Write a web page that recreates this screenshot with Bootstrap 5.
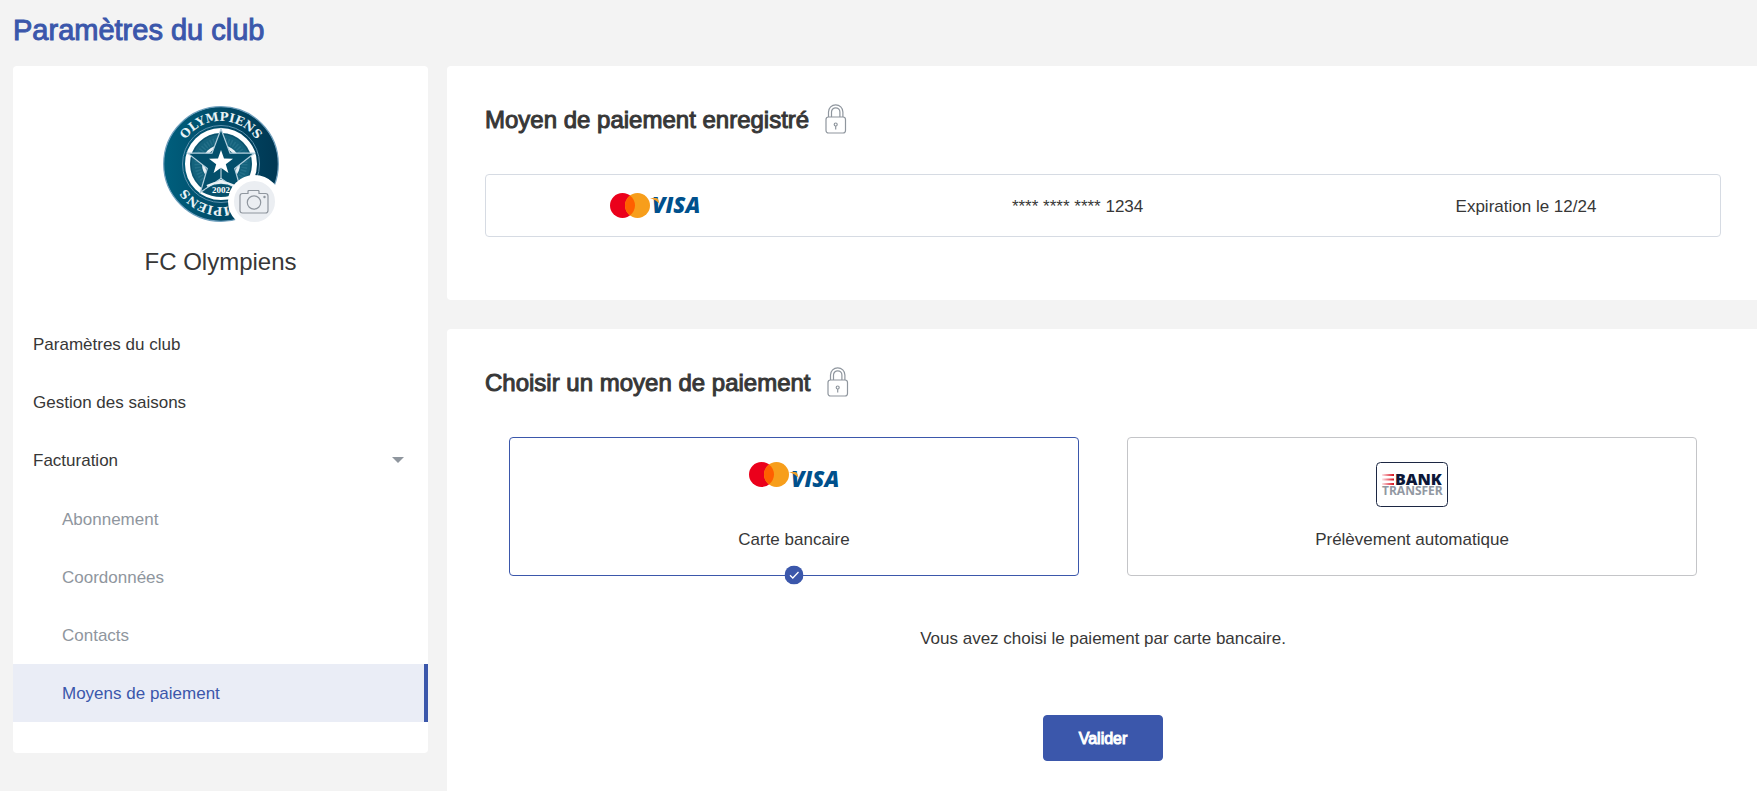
<!DOCTYPE html>
<html lang="fr">
<head>
<meta charset="utf-8">
<meta name="viewport" content="width=device-width, initial-scale=1">
<title>Paramètres du club</title>
<link href="https://cdn.jsdelivr.net/npm/bootstrap@5.3.0/dist/css/bootstrap.min.css" rel="stylesheet">
<style>
  :root { --brand: #3b57ab; --ink: #373737; --muted: #8f969e; }
  body { background: #f3f3f3; color: var(--ink); font-family: "Liberation Sans", Arial, sans-serif; font-size: 17px; line-height: 24px; }
  .page-title { color: var(--brand); font-size: 29px; line-height: 36px; font-weight: 400; -webkit-text-stroke: 1px; padding: 12px 13px 18px; }
  .layout { display: grid; grid-template-columns: minmax(0, 415fr) minmax(0, 1310fr); gap: 19px; padding-left: 13px; }
  .panel { background: #fff; border-radius: 4px; }
  .side { padding: 40px 0 31px; }
  .crest { width: 116px; height: 116px; }
  .photo-btn { right: -2px; bottom: -6px; width: 53px; height: 53px; border: 6px solid #fff; background: #ebeef2; color: var(--muted); }
  .club-name { font-size: 24px; line-height: 32px; margin: 24px 0 38px; }
  .side-link { height: 58px; padding: 0 20px; color: var(--ink); background: none; }
  .side-sub { padding: 2px 0 0 49px; color: var(--muted); }
  .side-sub.active { color: var(--brand); background: #eaedf6; border-right: 4px solid var(--brand); }
  .stack { display: flex; flex-direction: column; gap: 29px; }
  .stack .panel { border-top-right-radius: 0; border-bottom-right-radius: 0; padding: 38px 36px 63px 38px; }
  .panel-title { font-size: 24px; line-height: 32px; font-weight: 400; -webkit-text-stroke: 1px; }
  .panel-title svg { margin-bottom: 2px; }
  .saved { margin-top: 38px; height: 63px; padding: 0 10%; border: 1px solid #d6dbe3; border-radius: 4px; }
  .saved span { padding-top: 2px; }
  .choices { display: grid; grid-template-columns: 1fr 1fr; gap: 48px; margin-top: 38px; padding: 0 24px; }
  .choice { height: 139px; padding-top: 24px; border: 1px solid #c4c5c8; border-radius: 4px; cursor: pointer; }
  .choice-logo { height: 58px; }
  .tick { display: none; width: 19px; height: 19px; }
  .btn-check:checked + .choice { border-color: var(--brand); }
  .btn-check:checked + .choice .tick { display: block; }
  .notice { margin: 51px 0 64px; }
  .submit-btn { --bs-btn-bg: #3b57ab; --bs-btn-color: #fff; --bs-btn-border-color: #3b57ab; --bs-btn-hover-bg: #30488f; --bs-btn-hover-color: #fff; width: 120px; height: 46px; padding: 8px 0 6px; border-radius: 4px; font-size: 16px; -webkit-text-stroke: 1px; }
  @media (max-width: 991px) {
    .layout { grid-template-columns: minmax(0, 1fr); padding-right: 13px; }
    .choices { grid-template-columns: 1fr; padding: 0; }
  }
</style>
</head>
<body>
<svg class="d-none" aria-hidden="true">
  <symbol id="cards" viewBox="0 0 90 26">
    <circle cx="12.5" cy="12.5" r="12.5" fill="#eb001b"/>
    <circle cx="27.5" cy="12.5" r="12.5" fill="#f79e1b"/>
    <path d="M20 2.5a12.5 12.5 0 0 1 0 20a12.500 12.500 0 0 1 0-20z" fill="#ff5f00"/>
  </symbol>
  <symbol id="lock" viewBox="0 0 22 30">
    <g fill="none" stroke="#8f969e" stroke-width="1.200">
      <rect x="1" y="13" width="19.500" height="16" rx="2.500"/>
      <path d="M3.500 13V8a7.200 7.200 0 0 1 14.400 0v5M6.500 13V8a4.200 4.200 0 0 1 8.400 0v5"/>
      <circle cx="10.700" cy="20.500" r="1.500"/><path d="M10.700 22v3.500"/>
    </g>
  </symbol>
</svg>

<h1 class="page-title mb-0">Paramètres du club</h1>

<div class="layout">
  <aside>
    <div class="panel side">
      <div class="d-flex justify-content-center">
        <div class="position-relative">
          <svg class="crest d-block" viewBox="0 0 116 116" role="img" aria-label="Blason Olympiens">
            <defs>
              <linearGradient id="navy" x1="0" x2="1"><stop offset="0" stop-color="#005f7d"/><stop offset="1" stop-color="#003753"/></linearGradient>
              <path id="ringPath" d="M58 101a43 43 0 0 1 0-86a43 43 0 0 1 0 86"/>
            </defs>
            <circle cx="58" cy="58" r="57.300" fill="url(#navy)" stroke="#6f9fbd" stroke-width="1.200"/>
            <circle cx="58" cy="58" r="38.500" fill="none" stroke="#5d91ad" stroke-width="1"/>
            <circle cx="58" cy="58" r="33.500" fill="#14627c" stroke="#fff" stroke-width="5"/>
            <circle cx="58" cy="58" r="30" fill="none" stroke="#0a4e69" stroke-width="1"/>
            <circle cx="58" cy="58" r="23.500" fill="none" stroke="#236f88" stroke-width="6" stroke-dasharray="1.500 1.500"/>
            <circle cx="58" cy="58" r="17.500" fill="#0a5470" stroke="#e9f1f5" stroke-width="3"/>
            <path d="M58 23L67 47.200H91.300L71.700 62.500L78.600 86.300L58 72.500L37.400 86.300L44.300 62.500L24.700 47.200H49Z" fill="#034f6b" stroke="#b3cfdd" stroke-width="1.200"/>
            <path d="M58 62V73" stroke="#d9e7ee"/>
            <path d="M58 44L61 52.600L70 52.800L62.800 58.300L65.400 67L58 61.800L50.600 67L53.200 58.300L46 52.800L55 52.600Z" fill="#fff"/>
            <path d="M42 84Q58 73 74 84L77 86Q58 96 39 86Z" fill="#07506b"/>
            <path d="M44 80Q58 73 72 80" fill="none" stroke="#e9f1f5" stroke-width="2.500"/>
            <text x="58" y="87" text-anchor="middle" font-family="Liberation Serif, serif" font-weight="700" font-size="9" fill="#fff">2002</text>
            <g font-family="DejaVu Serif, serif" font-weight="700" font-size="12" fill="#e9f3f6" text-anchor="middle">
              <text><textPath href="#ringPath" startOffset="50%">OLYMPIENS</textPath></text>
              <text transform="rotate(180 58 58)"><textPath href="#ringPath" startOffset="50%">OLYMPIENS</textPath></text>
            </g>
          </svg>
          <button type="button" class="photo-btn position-absolute rounded-circle p-0 d-flex align-items-center justify-content-center" aria-label="Changer la photo">
            <svg width="30" height="24" viewBox="0 0 30 24" fill="none" stroke="currentColor" stroke-width="1.200">
              <path d="M3.500 3.500H9V1.500q0-1 1-1H19q1 0 1 1v2h6.500q2.500 0 2.500 2.500V20.500q0 2.500-2.500 2.500H3.500Q1 23 1 20.500V6Q1 3.500 3.500 3.500z"/>
              <circle cx="15" cy="12.500" r="6.700"/><circle cx="25.500" cy="7" r=".600"/>
            </svg>
          </button>
        </div>
      </div>
      <p class="club-name text-center">FC Olympiens</p>
      <nav class="d-flex flex-column">
        <a href="#" class="side-link d-flex align-items-center text-decoration-none">Paramètres du club</a>
        <a href="#" class="side-link d-flex align-items-center text-decoration-none">Gestion des saisons</a>
        <button type="button" class="side-link d-flex align-items-center justify-content-between border-0 text-start">Facturation
          <svg class="me-1" width="12" height="8" viewBox="0 0 12 8" aria-hidden="true"><path d="M0 0h12L6 6z" fill="#8f969e"/></svg>
        </button>
        <a href="#" class="side-link side-sub d-flex align-items-center text-decoration-none">Abonnement</a>
        <a href="#" class="side-link side-sub d-flex align-items-center text-decoration-none">Coordonnées</a>
        <a href="#" class="side-link side-sub d-flex align-items-center text-decoration-none">Contacts</a>
        <a href="#" class="side-link side-sub active d-flex align-items-center text-decoration-none" aria-current="page">Moyens de paiement</a>
      </nav>
    </div>
  </aside>

  <main class="stack">
    <section class="panel">
      <h2 class="panel-title d-flex align-items-center mb-0">Moyen de paiement enregistré
        <svg class="ms-3" width="22" height="30" aria-hidden="true"><use href="#lock"/></svg>
      </h2>
      <div class="saved d-flex align-items-center justify-content-between">
        <svg class="overflow-visible" width="90" height="26" role="img" aria-label="Mastercard Visa">
          <use href="#cards"/>
          <text x="42" y="20" font-family="Open Sans, sans-serif" font-weight="800" font-style="italic" font-size="22" fill="#00508c">VISA</text>
          <path d="M40 5h6q2 0 2.500 2l1 4q-3-4-9.500-6z" fill="#f0a02b"/>
        </svg>
        <span>**** **** **** 1234</span>
        <span>Expiration le 12/24</span>
      </div>
    </section>

    <section class="panel flex-grow-1">
      <h2 class="panel-title d-flex align-items-center mb-0">Choisir un moyen de paiement
        <svg class="ms-3" width="22" height="30" aria-hidden="true"><use href="#lock"/></svg>
      </h2>
      <form>
        <div class="choices">
          <div>
            <input class="btn-check" type="radio" name="moyen" id="carte" checked>
            <label class="choice position-relative d-flex flex-column align-items-center" for="carte">
              <span class="choice-logo mb-2">
                <svg class="d-block overflow-visible" width="90" height="26" role="img" aria-label="Mastercard Visa">
                  <use href="#cards"/>
                  <text x="42" y="25" font-family="Open Sans, sans-serif" font-weight="800" font-style="italic" font-size="22" fill="#00508c">VISA</text>
                  <path d="M40 10h6q2 0 2.500 2l1 4q-3-4-9.500-6z" fill="#f0a02b"/>
                </svg>
              </span>
              <span>Carte bancaire</span>
              <svg class="tick position-absolute top-100 start-50 translate-middle" viewBox="0 0 19 19" aria-hidden="true"><circle cx="9.500" cy="9.500" r="9.500" fill="#3b57ab"/><path d="M5.500 9.800L8.300 12.500L14 6.500" fill="none" stroke="#fff" stroke-width="1.300"/></svg>
            </label>
          </div>
          <div>
            <input class="btn-check" type="radio" name="moyen" id="prelevement">
            <label class="choice position-relative d-flex flex-column align-items-center" for="prelevement">
              <span class="choice-logo mb-2">
                <svg class="d-block" width="72" height="46" role="img" aria-label="Bank Transfer">
                  <defs><linearGradient id="speed"><stop offset="0" stop-color="#e2001a" stop-opacity=".1"/><stop offset="1" stop-color="#d5101a"/></linearGradient></defs>
                  <rect x=".500" y=".500" width="71" height="44" rx="4" fill="#fff" stroke="#1c2743"/>
                  <path d="M6 12h12v2H6zM6 16.500h12v2H6zM6 21h12v2H6z" fill="url(#speed)"/>
                  <text x="19" y="23" font-family="Open Sans, sans-serif" font-weight="800" font-size="16" fill="#0d1738">BANK</text>
                  <text x="6" y="33" font-family="Open Sans, sans-serif" font-weight="700" font-size="12" fill="#9298a2">TRANSFER</text>
                </svg>
              </span>
              <span>Prélèvement automatique</span>
              <svg class="tick position-absolute top-100 start-50 translate-middle" viewBox="0 0 19 19" aria-hidden="true"><circle cx="9.500" cy="9.500" r="9.500" fill="#3b57ab"/><path d="M5.500 9.800L8.300 12.500L14 6.500" fill="none" stroke="#fff" stroke-width="1.300"/></svg>
            </label>
          </div>
        </div>
        <p class="notice text-center">Vous avez choisi le paiement par carte bancaire.</p>
        <div class="text-center"><button type="button" class="btn submit-btn">Valider</button></div>
      </form>
    </section>
  </main>
</div>
<script src="https://cdn.jsdelivr.net/npm/bootstrap@5.3.0/dist/js/bootstrap.bundle.min.js"></script>
</body>
</html>
